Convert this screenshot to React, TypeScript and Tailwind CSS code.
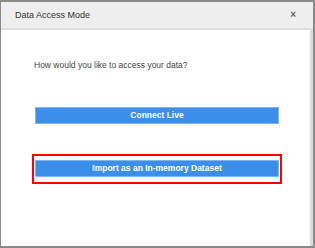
import React from 'react'

const App = () => {
  return (
    <div className="w-[315px] h-[248px] bg-white font-['Liberation_Sans',Arial,sans-serif]">
      <div className="h-full flex flex-col border-t-2 border-l border-b-2 border-r-2 border-[#8a8a8a]">
        <div className="h-[28px] shrink-0 flex items-center justify-between pl-[14px] pr-[17px] bg-[#eeeeee] border-b-2 border-[#e0e0e0]">
          <span className="text-[9px] text-[#333333] pt-[1px]">Data Access Mode</span>
          <span className="text-[10px] font-bold text-[#666666] leading-none">×</span>
        </div>
        <div className="flex-1 flex border-r-[3px] border-[#dcdcdc]">
          <div className="flex-1 flex flex-col">
            <p className="mt-[29px] pl-[33px] text-[8.5px] text-[#444444]">How would you like to access your data?</p>
            <div className="mt-[35px] pl-[34px] pr-[31px]">
              <button className="w-full h-[17px] flex items-center justify-center bg-[#3b8fea] border border-[#7fb6f2] text-white text-[8.5px] font-bold">
                Connect Live
              </button>
            </div>
            <div className="mt-[30px] pl-[31px] pr-[28px]">
              <div className="border-2 border-[#ff0000] px-[1px] pt-[4px] pb-[5px]">
                <button className="w-full h-[17px] flex items-center justify-center bg-[#3b8fea] border border-[#7fb6f2] text-white text-[8.5px] font-bold">
                  Import as an In-memory Dataset
                </button>
              </div>
            </div>
          </div>
        </div>
      </div>
    </div>
  )
}

export default App
